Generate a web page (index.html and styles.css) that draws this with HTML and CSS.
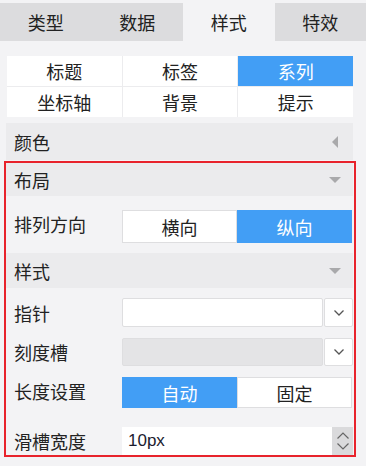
FILE: index.html
```html
<!DOCTYPE html>
<html lang="zh-CN">
<head>
    <meta charset="UTF-8">
    <title>样式设置</title>
    <link rel="stylesheet" href="styles.css">
</head>
<body>

    <!-- Top tabs -->
    <div class="tabs">
        <div class="tab">类型</div>
        <div class="tab">数据</div>
        <div class="tab active">样式</div>
        <div class="tab">特效</div>
    </div>

    <div class="panel">
        <!-- Sub tabs -->
        <div class="subtabs">
            <div class="subtab">标题</div>
            <div class="subtab">标签</div>
            <div class="subtab active">系列</div>
            <div class="subtab">坐标轴</div>
            <div class="subtab">背景</div>
            <div class="subtab">提示</div>
        </div>

        <div class="section-head color-head">
            <span>颜色</span>
            <span class="arrow-left"></span>
        </div>

        <!-- Highlighted area -->
        <div class="highlight">
            <div class="section-head layout-head">
                <span>布局</span>
                <span class="arrow-down"></span>
            </div>

            <div class="row row-top first-row">
                <label class="row-label">排列方向</label>
                <div class="toggle">
                    <div class="toggle-item">横向</div>
                    <div class="toggle-item on">纵向</div>
                </div>
            </div>

            <div class="section-head style-head">
                <span>样式</span>
                <span class="arrow-down"></span>
            </div>

            <div class="row select-row">
                <label class="row-label">指针</label>
                <div class="select">
                    <div class="select-field"></div>
                    <div class="select-btn">
                        <svg width="12" height="8" viewBox="0 0 12 8"><path d="M1.5 1.5 L6 6 L10.5 1.5" fill="none" stroke="#555" stroke-width="1.3"/></svg>
                    </div>
                </div>
            </div>

            <div class="row select-row">
                <label class="row-label">刻度槽</label>
                <div class="select">
                    <div class="select-field disabled"></div>
                    <div class="select-btn">
                        <svg width="12" height="8" viewBox="0 0 12 8"><path d="M1.5 1.5 L6 6 L10.5 1.5" fill="none" stroke="#555" stroke-width="1.3"/></svg>
                    </div>
                </div>
            </div>

            <div class="row row-top length-row">
                <label class="row-label">长度设置</label>
                <div class="toggle short">
                    <div class="toggle-item on">自动</div>
                    <div class="toggle-item">固定</div>
                </div>
            </div>

            <div class="row number-row">
                <label class="row-label">滑槽宽度</label>
                <div class="number">
                    <div class="number-value">10px</div>
                    <div class="spin">
                        <svg width="14" height="9" viewBox="0 0 14 9"><path d="M1.5 7.5 L7 2 L12.5 7.5" fill="none" stroke="#666" stroke-width="1.2"/></svg>
                        <svg width="14" height="9" viewBox="0 0 14 9"><path d="M1.5 1.5 L7 7 L12.5 1.5" fill="none" stroke="#666" stroke-width="1.2"/></svg>
                    </div>
                </div>
            </div>
        </div>
    </div>

</body>
</html>
```

FILE: styles.css
```css
/* Page */
body {
    margin: 0;
    width: 366px;
    height: 466px;
    overflow: hidden;
    background-color: #f3f3f5;
    font-family: "Noto Sans CJK SC", "Liberation Sans", sans-serif;
    color: #222;
}

/* Top tabs */
.tabs {
    display: flex;
    margin-top: 3px;
    height: 38px;
    background-color: #dcdcde;
}

.tab {
    flex: 1;
    display: flex;
    align-items: center;
    justify-content: center;
    font-size: 18px;
    line-height: 1;
}

.tab.active {
    background-color: #f3f3f5;
}

/* Panel */
.panel {
    padding: 15px 13px 0 6px;
}

.subtabs {
    display: grid;
    grid-template-columns: repeat(3, 1fr);
    gap: 1px;
    margin-left: 1px;
    background-color: #ececee;
}

.subtab {
    height: 30px;
    display: flex;
    align-items: center;
    justify-content: center;
    background-color: #fff;
    font-size: 18px;
    line-height: 1;
}

.subtab.active {
    background-color: #429ef5;
    color: #fff;
}

/* Section headers */
.section-head {
    display: flex;
    align-items: center;
    justify-content: space-between;
    padding: 0 12px 0 8px;
    background-color: #ebebed;
    font-size: 18px;
    line-height: 1;
}

.color-head {
    margin-top: 6px;
    height: 37px;
}

.layout-head {
    height: 33px;
}

.style-head {
    margin-top: 10px;
    height: 35px;
}

.arrow-left {
    width: 0;
    height: 0;
    margin-right: 3px;
    border-top: 6px solid transparent;
    border-bottom: 6px solid transparent;
    border-right: 6px solid #a9a9ab;
}

.arrow-down {
    width: 0;
    height: 0;
    border-left: 6px solid transparent;
    border-right: 6px solid transparent;
    border-top: 6px solid #a9a9ab;
}

/* Highlight box */
.highlight {
    margin: 1px -3px 0 -2px;
    padding-right: 1px;
    border: 2px solid #e8232c;
}

/* Rows */
.row {
    display: flex;
    align-items: center;
    padding-left: 8px;
}

.row-top {
    align-items: flex-start;
}

.row-label {
    width: 108px;
    flex-shrink: 0;
    font-size: 18px;
    line-height: 1;
}

.row-top .row-label {
    padding-top: 5px;
}

.first-row {
    margin-top: 14px;
}

.select-row {
    margin-top: 10px;
}

.select-row + .select-row {
    margin-top: 11px;
}

.length-row {
    margin-top: 11px;
}

.number-row {
    margin-top: 19px;
}

/* Toggle */
.toggle {
    flex: 1;
    display: flex;
    height: 33px;
    margin-right: 1px;
}

.toggle.short {
    height: 31px;
}

.toggle-item {
    flex: 1;
    display: flex;
    align-items: center;
    justify-content: center;
    background-color: #fff;
    border: 1px solid #dedee0;
    font-size: 18px;
    line-height: 1;
}

.toggle-item.on {
    background-color: #429ef5;
    border-color: #429ef5;
    color: #fff;
}

/* Select */
.select {
    flex: 1;
    display: flex;
    height: 29px;
}

.select-row + .select-row .select {
    height: 28px;
}

.select-field {
    flex: 1;
    background-color: #fff;
    border: 1px solid #dedee0;
    border-radius: 2px;
}

.select-field.disabled {
    background-color: #e4e4e6;
}

.select-btn {
    width: 27px;
    margin-left: 1px;
    display: flex;
    align-items: center;
    justify-content: center;
    background-color: #fff;
    border: 1px solid #dedee0;
    border-radius: 2px;
}

/* Number input */
.number {
    flex: 1;
    display: flex;
    height: 28px;
}

.number-value {
    flex: 1;
    display: flex;
    align-items: center;
    padding-left: 6px;
    background-color: #fff;
    font-family: "Liberation Sans", sans-serif;
    font-size: 17px;
    color: #1c1c30;
}

.spin {
    width: 21px;
    display: flex;
    flex-direction: column;
    align-items: center;
    justify-content: center;
    gap: 2px;
    background-color: #dadadc;
}
```
